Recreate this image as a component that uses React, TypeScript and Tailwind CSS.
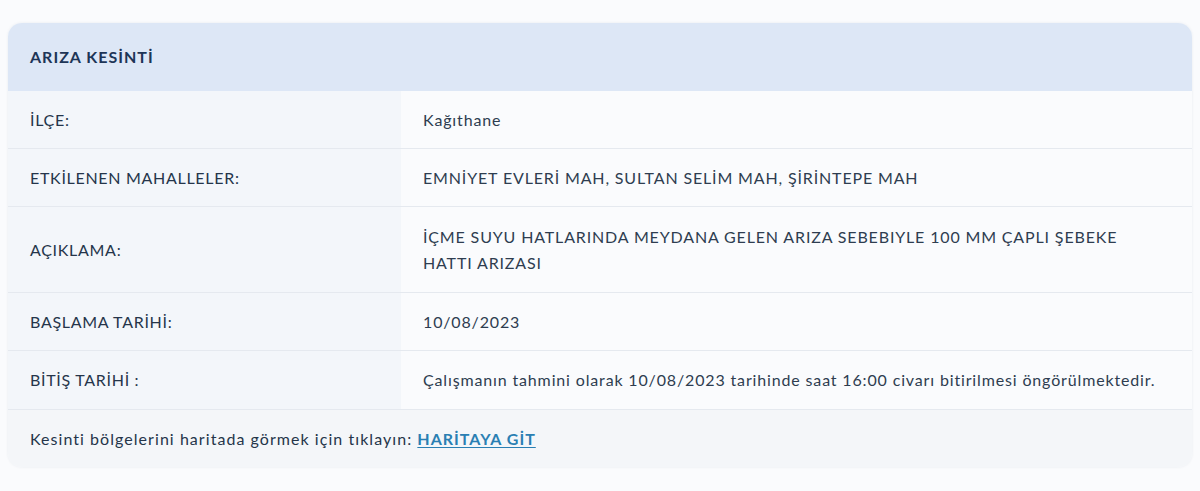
const rows: { label: string; value: string[]; h: string }[] = [
  { label: "İLÇE:", value: ["Kağıthane"], h: "h-[58px]" },
  { label: "ETKİLENEN MAHALLELER:", value: ["EMNİYET EVLERİ MAH, SULTAN SELİM MAH, ŞİRİNTEPE MAH"], h: "h-[58px]" },
  {
    label: "AÇIKLAMA:",
    value: ["İÇME SUYU HATLARINDA MEYDANA GELEN ARIZA SEBEBIYLE 100 MM ÇAPLI ŞEBEKE", "HATTI ARIZASI"],
    h: "h-[86px]",
  },
  { label: "BAŞLAMA TARİHİ:", value: ["10/08/2023"], h: "h-[58px]" },
  {
    label: "BİTİŞ TARİHİ :",
    value: ["Çalışmanın tahmini olarak 10/08/2023 tarihinde saat 16:00 civarı bitirilmesi öngörülmektedir."],
    h: "h-[59px]",
  },
];

export default function App() {
  return (
    <div className="min-h-[491px] bg-[#fafbfd] pt-[23px] px-2 font-['Lato',sans-serif]">
      <div className="rounded-[14px] overflow-hidden shadow-[0_0_3px_rgba(30,50,90,0.08)]">
        <div className="h-[68px] bg-[#dde7f6] flex items-center px-[22px]">
          <h2 className="text-[16px] font-bold tracking-[1px] text-[#1d3557]">ARIZA KESİNTİ</h2>
        </div>
        {rows.map((r) => (
          <div key={r.label} className={`flex border-b border-[#e5e9ef] ${r.h}`}>
            <div className="w-[393px] bg-[#f3f6fa] flex items-center px-[22px] text-[16px] tracking-[0.7px] text-[#25354a]">
              {r.label}
            </div>
            <div className="flex-1 bg-[#fafbfd] flex flex-col justify-center px-[22px] text-[16px] leading-[26px] tracking-[0.85px] text-[#2e3d50]">
              {r.value.map((v) => (
                <span key={v}>{v}</span>
              ))}
            </div>
          </div>
        ))}
        <div className="h-[57px] bg-[#f4f6f9] flex items-center px-[22px] text-[16px] tracking-[1.05px] text-[#25354a]">
          Kesinti bölgelerini haritada görmek için tıklayın:&nbsp;
          <a href="#" className="font-bold tracking-[1px] text-[#2a7fb3] underline underline-offset-2">
            HARİTAYA GİT
          </a>
        </div>
      </div>
    </div>
  );
}
